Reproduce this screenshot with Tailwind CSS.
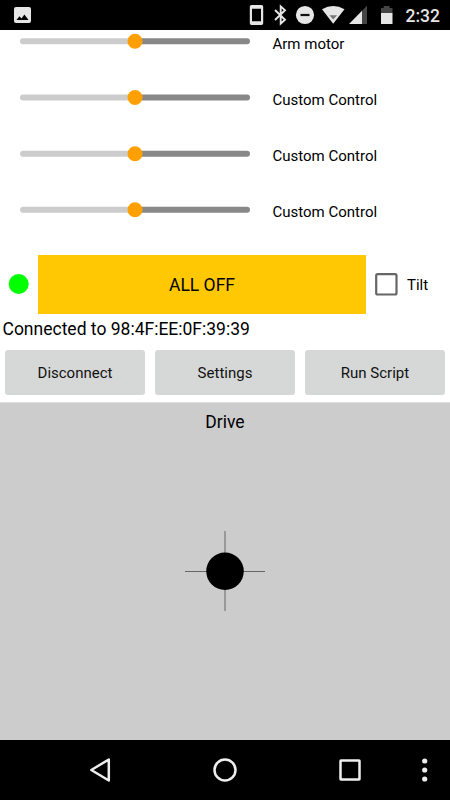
<!DOCTYPE html>
<html lang="en">
<head>
<meta charset="utf-8">
<title>Controller</title>
<script src="https://cdn.jsdelivr.net/npm/@tailwindcss/browser@4"></script>
</head>
<body class="w-[450px] h-[800px] overflow-hidden bg-white text-black font-[Roboto,sans-serif] flex flex-col">
<header class="h-[30px] shrink-0 bg-black">
<svg class="block" width="450" height="30" viewBox="0 0 450 30" fill="#e6e6e6">
<path fill-rule="evenodd" d="M16 7h13a2 2 0 0 1 2 2v12a2 2 0 0 1-2 2H16a2 2 0 0 1-2-2V9a2 2 0 0 1 2-2zM16.500 20h12l-4.100-5.500-2.900 4-2.100-2.300z"/>
<path fill-rule="evenodd" d="M251.500 5h10a1.700 1.700 0 0 1 1.700 1.700v16.600a1.700 1.700 0 0 1-1.700 1.700h-10a1.700 1.700 0 0 1-1.700-1.700V6.700A1.700 1.700 0 0 1 251.500 5zM252 8.700v12.600h9V8.700z"/>
<path d="M275 10l10 9.700-4.300 3.900V6.400l4.300 3.900L275 20" fill="none" stroke="#e6e6e6" stroke-width="1.900"/>
<circle cx="305" cy="15" r="9.100"/><rect x="300.500" y="13.900" width="9" height="2.200" fill="#111"/>
<path d="M322 9.300Q333.200 2.600 344.500 9.300L333.200 23.800z"/><path d="M329.400 15.200h7.700l-3.900 4.300z" fill="#777"/>
<path d="M362 10.800l5-5V24h-5z" fill="#454545"/><path d="M349 24L362 10.800V24z"/>
<path d="M381 8h2.700V6h5.800v2h3v5.200H381z" fill="#454545"/><path d="M381 13h11.500v11H381z"/>
<text x="405.500" y="21.500" font-family="Roboto,sans-serif" font-weight="500" font-size="17.500" textLength="34.500">2:32</text>
</svg>
</header>
<main class="h-[710px] shrink-0 flex flex-col">
<section class="h-[225px] shrink-0 flex flex-col text-[15px] leading-5 overflow-hidden">
<div class="h-[39px] shrink-0 flex"><svg class="shrink-0 overflow-visible" width="272.500" height="23"><path d="M23 11.250H135" stroke="#ccc" stroke-width="6" stroke-linecap="round"/><path d="M135 11.250H247" stroke="#888" stroke-width="6" stroke-linecap="round"/><circle cx="135" cy="11.250" r="7.500" fill="#ffa000"/></svg><span class="pt-[4px]">Arm motor</span></div>
<div class="h-[56px] shrink-0 flex pt-[17px]"><svg class="shrink-0" width="272.500" height="23"><path d="M23 11.500H135" stroke="#ccc" stroke-width="6" stroke-linecap="round"/><path d="M135 11.500H247" stroke="#888" stroke-width="6" stroke-linecap="round"/><circle cx="135" cy="11.500" r="7.500" fill="#ffa000"/></svg><span class="pt-[4px]">Custom Control</span></div>
<div class="h-[56px] shrink-0 flex pt-[17px]"><svg class="shrink-0" width="272.500" height="23"><path d="M23 11.750H135" stroke="#ccc" stroke-width="6" stroke-linecap="round"/><path d="M135 11.750H247" stroke="#888" stroke-width="6" stroke-linecap="round"/><circle cx="135" cy="11.750" r="7.500" fill="#ffa000"/></svg><span class="pt-[4px]">Custom Control</span></div>
<div class="h-[56px] shrink-0 flex pt-[17px]"><svg class="shrink-0" width="272.500" height="23"><path d="M23 11.750H135" stroke="#ccc" stroke-width="6" stroke-linecap="round"/><path d="M135 11.750H247" stroke="#888" stroke-width="6" stroke-linecap="round"/><circle cx="135" cy="11.750" r="7.500" fill="#ffa000"/></svg><span class="pt-[4px]">Custom Control</span></div>
</section>
<section class="h-[59px] shrink-0 flex items-center">
<svg class="mr-[9px] mb-px" width="29" height="22"><circle cx="18.700" cy="11" r="10" fill="#0f0"/></svg>
<button class="w-[328px] h-[59px] bg-[#ffc803] text-[17.500px] leading-6 pt-px">ALL OFF</button>
<svg class="ml-[9px] mb-px" width="23" height="23"><rect x="1.200" y="1.200" width="20.300" height="20.300" rx="1.500" fill="none" stroke="#666" stroke-width="2.200"/></svg>
<span class="ml-[9px] text-[15px] leading-5 pt-px">Tilt</span>
</section>
<p class="h-[36px] shrink-0 pl-[2.500px] pt-[3px] text-[17.500px] leading-6">Connected to 98:4F:EE:0F:39:39</p>
<section class="h-[45px] shrink-0 px-[5px] flex gap-[10px] text-[15px] leading-5 text-[#111]">
<button class="flex-1 rounded-[3px] bg-[#d6d8d7] pt-px">Disconnect</button>
<button class="flex-1 rounded-[3px] bg-[#d6d8d7] pt-px">Settings</button>
<button class="flex-1 rounded-[3px] bg-[#d6d8d7] pt-px">Run Script</button>
</section>
<section class="mt-[7px] flex-1 bg-[#ccc] border-t border-[#dedede] flex flex-col items-center">
<h2 class="h-[127px] pt-[7px] text-[17.500px] leading-6">Drive</h2>
<svg width="80" height="82" viewBox="185 530 80 82"><path d="M225 531v80" stroke="#999" stroke-width="2"/><path d="M185 571.500h80" stroke="#666"/><circle cx="225" cy="571.250" r="18.750"/></svg>
</section>
</main>
<nav class="h-[60px] shrink-0 bg-black">
<svg class="block" width="450" height="60" viewBox="0 740 450 60" fill="none" stroke="#eee" stroke-width="2.500" stroke-linejoin="round">
<path d="M91.300 770L108.800 759.500v21z"/><circle cx="225" cy="770" r="10.500"/><rect x="340.500" y="760.500" width="19" height="19" rx=".5"/>
<g fill="#eee" stroke="none"><circle cx="424.700" cy="761" r="2.600"/><circle cx="424.700" cy="770" r="2.600"/><circle cx="424.700" cy="779" r="2.600"/></g>
</svg>
</nav>
</body>
</html>
